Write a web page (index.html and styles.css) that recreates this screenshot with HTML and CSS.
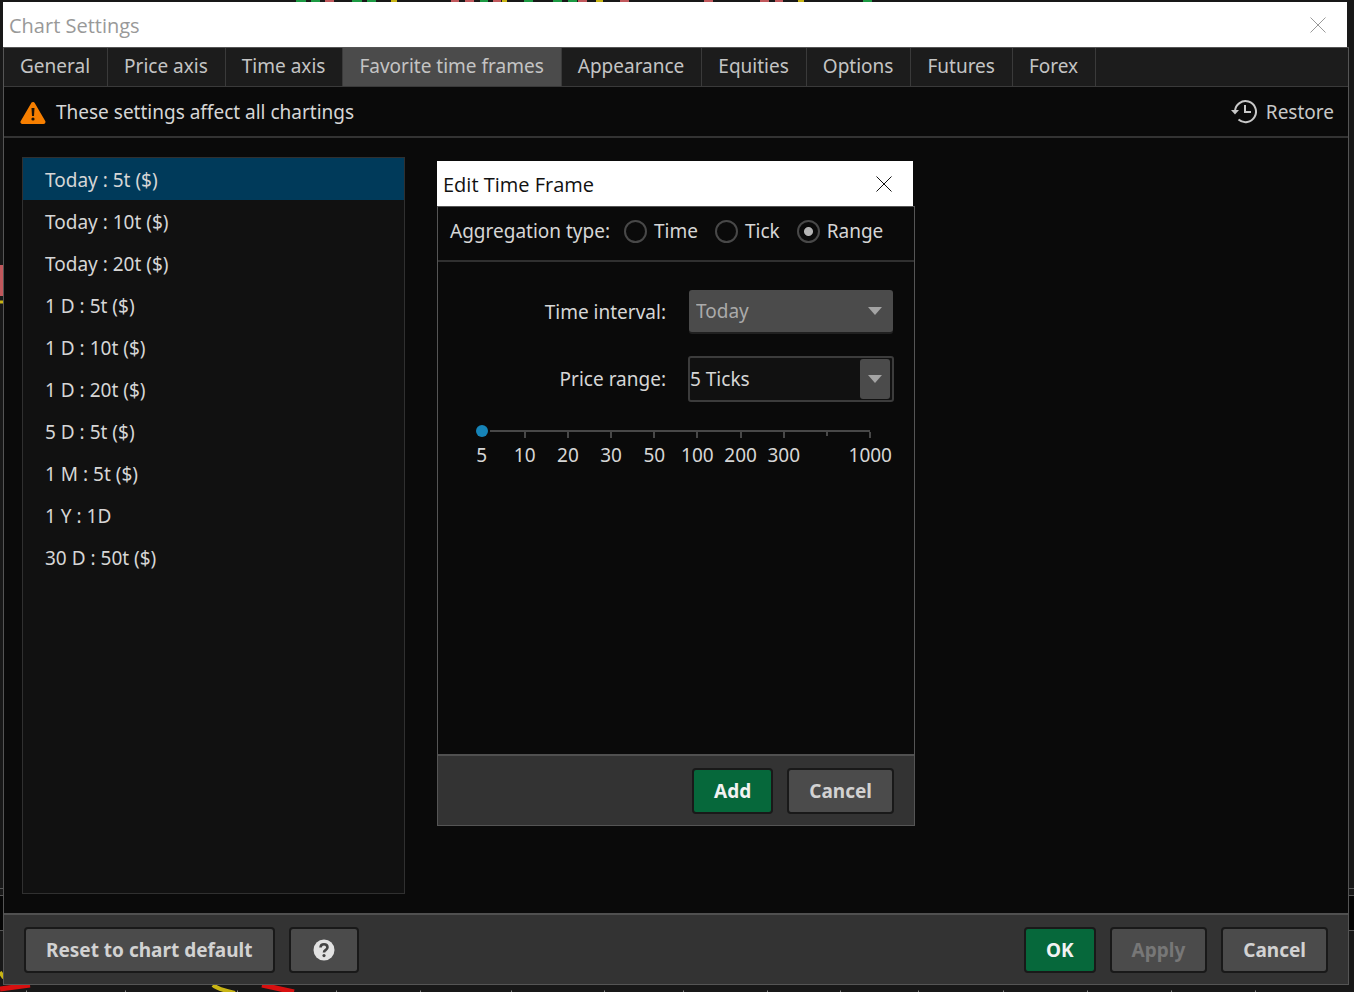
FILE: index.html
```html
<!DOCTYPE html>
<html lang="en">
<head>
<meta charset="utf-8">
<title>Chart Settings</title>
<link rel="stylesheet" href="styles.css">
</head>
<body>
<svg class="backdrop" viewBox="0 0 1354 992" preserveAspectRatio="none" aria-hidden="true">
  <rect width="1354" height="992" fill="#181818"/>
  <path d="M0 265h3v31H0z" fill="#c1585c"/>
  <path d="M0 302h3" stroke="#c8b414" stroke-width="3"/>
  <path d="M0 896h1354v34H0z" fill="#050505"/>
  <path d="M0 888.500h1354M0 895.500h1354M0 930.500h1354" stroke="#555"/>
  <path d="M296 0h10m5 0h9m32 0h10m5 0h9m104 0h8m36 0h9m20 0h9m6 0h9m286 0h9" stroke="#1c9a43" stroke-width="4"/>
  <path d="M325 0h9m117 0h8m6 0h9m19 0h8m77 0h9m33 0h9m75 0h9m47 0h9m6 0h8" stroke="#c1585c" stroke-width="4"/>
  <path d="M391 0h6m105 0h5m89 0h7m195 0h6" stroke="#c8b414" stroke-width="4"/>
  <path d="M0 972l4 6M213 985q4 4 22 8" stroke="#c8b414" stroke-width="4" fill="none"/>
  <path d="M0 989l30-4M262 985l32 7" stroke="#d81010" stroke-width="5" fill="none"/>
  <path d="M26 992h1m98 0h1m111 0h1m98 0h1m83 0h1m90 0h1m92 0h1m78 0h1m83 0h1m72 0h1m77 0h1m84 0h1m83 0h1m83 0h1m83 0h1" stroke="#888" stroke-width="3"/>
</svg>

<div class="window">
  <header class="titlebar titlebar-inactive">
    <h1 class="title">Chart Settings</h1>
    <button class="close" type="button" aria-label="Close settings">
      <svg width="16" height="16" viewBox="0 0 16 16"><path d="M.5.5l15 15M15.500.5l-15 15" stroke="currentColor" fill="none"/></svg>
    </button>
  </header>

  <div class="frame">
    <nav class="tabs">
      <button class="tab" type="button">General</button>
      <button class="tab" type="button">Price axis</button>
      <button class="tab" type="button">Time axis</button>
      <button class="tab tab-active" type="button">Favorite time frames</button>
      <button class="tab" type="button">Appearance</button>
      <button class="tab" type="button">Equities</button>
      <button class="tab" type="button">Options</button>
      <button class="tab" type="button">Futures</button>
      <button class="tab" type="button">Forex</button>
    </nav>

    <div class="notice">
      <svg width="26" height="24" viewBox="0 0 26 24" aria-hidden="true">
        <path d="M13 4L2.500 22h21z" fill="#f77f00" stroke="#f77f00" stroke-width="4" stroke-linejoin="round"/>
        <path d="M11.500 8h3l-.5 8h-2z" fill="#1a1208"/><circle cx="13" cy="19" r="1.600" fill="#1a1208"/>
      </svg>
      <span>These settings affect all chartings</span>
      <button class="restore" type="button">
        <svg width="26" height="26" viewBox="0 0 26 26" fill="none" stroke="currentColor" stroke-width="2" aria-hidden="true">
          <path d="M4 12A10.500 10.500 0 1 1 7.500 20.500"/><path d="M14 6v7h6"/>
          <path d="M0 11h8l-4 4.500z" fill="currentColor" stroke="none"/>
        </svg>
        Restore
      </button>
    </div>

    <main class="content">
      <ul class="list">
        <li class="row row-selected">Today : 5t ($)</li>
        <li class="row">Today : 10t ($)</li>
        <li class="row">Today : 20t ($)</li>
        <li class="row">1 D : 5t ($)</li>
        <li class="row">1 D : 10t ($)</li>
        <li class="row">1 D : 20t ($)</li>
        <li class="row">5 D : 5t ($)</li>
        <li class="row">1 M : 5t ($)</li>
        <li class="row">1 Y : 1D</li>
        <li class="row">30 D : 50t ($)</li>
      </ul>
    </main>

    <footer class="footer">
      <button class="btn" type="button">Reset to chart default</button>
      <button class="btn btn-help" type="button" aria-label="Help">
        <svg width="22" height="22" viewBox="0 0 22 22" aria-hidden="true">
          <circle cx="11" cy="11" r="10.500" fill="#e2e2e2"/>
          <path d="M7.500 8.500Q7.700 5.300 11 5.300T14.500 8.300Q14.500 10 12.700 11T11 13.500" fill="none" stroke="#444" stroke-width="2.600"/>
          <circle cx="11" cy="16.600" r="1.600" fill="#444"/>
        </svg>
      </button>
      <span class="spacer"></span>
      <button class="btn btn-primary" type="button">OK</button>
      <button class="btn" type="button" disabled>Apply</button>
      <button class="btn" type="button">Cancel</button>
    </footer>
  </div>

  <section class="dialog" role="dialog" aria-labelledby="dialog-title">
    <header class="titlebar">
      <h2 class="title" id="dialog-title">Edit Time Frame</h2>
      <button class="close" type="button" aria-label="Close dialog">
        <svg width="16" height="16" viewBox="0 0 16 16"><path d="M.5.5l15 15M15.500.5l-15 15" stroke="currentColor" fill="none"/></svg>
      </button>
    </header>
    <div class="frame">
      <div class="aggregation" role="radiogroup" aria-labelledby="agg-label">
        <span class="agg-label" id="agg-label">Aggregation type:</span>
        <label class="option"><input class="radio" type="radio" name="agg">Time</label>
        <label class="option"><input class="radio" type="radio" name="agg">Tick</label>
        <label class="option"><input class="radio" type="radio" name="agg" checked>Range</label>
      </div>
      <div class="form">
        <div class="fields">
          <label for="interval">Time interval:</label>
          <div class="select-wrap">
            <select class="select" id="interval" disabled><option>Today</option></select>
            <svg class="arrow" width="14" height="8" viewBox="0 0 14 8" aria-hidden="true"><path d="M0 0h14L7 8z" fill="#a4a4a4"/></svg>
          </div>
          <label for="price">Price range:</label>
          <div class="combo">
            <input class="combo-text" id="price" type="text" value="5 Ticks">
            <button class="combo-button" type="button" aria-label="Show price ranges">
              <svg width="14" height="8" viewBox="0 0 14 8" aria-hidden="true"><path d="M0 0h14L7 8z" fill="#a4a4a4"/></svg>
            </button>
          </div>
        </div>
        <div class="slider">
          <input class="range" type="range" min="0" max="9" value="0" aria-label="Price range in ticks">
          <ol class="scale">
            <li class="mark mark-first">5</li><li class="mark">10</li><li class="mark">20</li><li class="mark">30</li><li class="mark">50</li><li class="mark">100</li><li class="mark">200</li><li class="mark">300</li><li class="mark mark-minor"></li><li class="mark">1000</li>
          </ol>
        </div>
      </div>
      <footer class="footer">
        <span class="spacer"></span>
        <button class="btn btn-primary" type="button">Add</button>
        <button class="btn" type="button">Cancel</button>
      </footer>
    </div>
  </section>
</div>
</body>
</html>
```
FILE: styles.css
```css
* { box-sizing: border-box; }

body {
  margin: 0;
  min-height: 100vh;
  display: flex;
  padding: 2px 5px 7px 3px;
  background: #181818;
  color: #d6d6d6;
  font: 19px/26px "Noto Sans", "Open Sans", sans-serif;
}

button, input, select { font: inherit; color: inherit; margin: 0; }

.backdrop {
  position: absolute;
  inset: 0;
  width: 100%;
  height: 100%;
}

.window {
  position: relative;
  flex: 1;
  display: flex;
  flex-direction: column;
}

.titlebar {
  display: flex;
  align-items: center;
  justify-content: space-between;
  height: 45px;
  margin-right: 2px;
  padding: 0 21px 0 6px;
  background: #fff;
  color: #111;
}
.titlebar-inactive { color: #999; }

.title {
  margin: 0;
  padding-top: 2px;
  font-family: "Open Sans", "Noto Sans", sans-serif;
  font-size: 20px;
  font-weight: 400;
}

.close {
  display: flex;
  padding: 0;
  border: 0;
  background: none;
}

.frame {
  flex: 1;
  display: flex;
  flex-direction: column;
  border: 1px solid #555;
  background: #0a0a0a;
}

.tabs {
  display: flex;
  height: 39px;
  background: #1c1c1c;
  border-bottom: 1px solid #3a3a3a;
}
.tab {
  padding: 0 17px 2px 16px;
  border: 0;
  border-right: 1px solid #3a3a3a;
  background: none;
  color: #c4c4c4;
}
.tab-active { background: #4b4b4b; }

.notice {
  display: flex;
  align-items: center;
  gap: 10px;
  height: 51px;
  padding: 0 14px 0 16px;
  border-bottom: 2px solid #333;
}
.restore {
  display: flex;
  align-items: center;
  gap: 9px;
  margin-left: auto;
  padding: 0;
  border: 0;
  background: none;
  color: #c8c8c8;
}

.content {
  flex: 1;
  display: flex;
  padding: 19px 18px;
}
.list {
  width: 383px;
  margin: 0;
  padding: 0;
  list-style: none;
  border: 1px solid #303030;
  background: #111;
}
.row {
  height: 42px;
  padding: 9px 22px 7px;
}
.row-selected { background: #003a5a; }

.footer {
  display: flex;
  align-items: center;
  gap: 14px;
  height: 71px;
  padding: 0 20px;
  border-top: 2px solid #505050;
  background: #333;
}
.spacer { flex: 1; }

.btn {
  height: 46px;
  padding: 0 20px;
  border: 2px solid #191919;
  border-radius: 4px;
  background: #4b4b4b;
  color: #d2d2d2;
  font-weight: 700;
}
.btn-primary { background: #06683b; color: #f2f2f2; }
.btn:disabled { color: #777; }
.btn-help {
  display: flex;
  align-items: center;
  justify-content: center;
  width: 70px;
}
.footer .spacer { margin: 0 -14px; }

.dialog {
  position: absolute;
  top: 159px;
  left: 434px;
  display: flex;
  flex-direction: column;
  width: 478px;
  height: 665px;
}

.aggregation {
  display: flex;
  align-items: center;
  height: 55px;
  padding: 0 12px 5px;
  border-bottom: 2px solid #303030;
  gap: 17px;
}
.agg-label { margin-right: -3px; }
.option {
  display: flex;
  align-items: center;
  gap: 7px;
}
.radio {
  appearance: none;
  width: 23px;
  height: 23px;
  border: 2px solid #484848;
  border-radius: 50%;
}
.radio:checked { background: radial-gradient(circle, #b4b4b4 4px, transparent 5px); }

.form { flex: 1; padding-top: 27px; }
.fields {
  display: grid;
  grid-template-columns: 1fr 206px;
  align-items: center;
  gap: 22px;
  padding-right: 20px;
  text-align: right;
}
.select-wrap {
  position: relative;
  height: 45px;
  padding: 1px;
}
.select {
  appearance: none;
  width: 100%;
  height: 42px;
  padding: 0 7px;
  border: 0;
  border-radius: 3px;
  background: #4b4b4b;
  color: #aaa;
  opacity: 1;
  box-shadow: 0 2px #202020;
}
.arrow {
  position: absolute;
  top: 18px;
  right: 12px;
}
.combo {
  display: flex;
  height: 46px;
  padding: 1px 2px 1px 0;
  border: 2px solid #3c3c3c;
  border-radius: 3px;
  background: #111;
}
.combo-text {
  flex: 1;
  min-width: 0;
  padding: 0;
  border: 0;
  background: none;
}
.combo-button {
  display: flex;
  align-items: center;
  justify-content: center;
  width: 30px;
  padding: 0;
  border: 0;
  border-radius: 3px;
  background: #4b4b4b;
}

.slider { padding: 22px 22px 0; }
.range {
  appearance: none;
  position: relative;
  display: block;
  width: calc(100% - 32px);
  height: 14px;
  margin: 0 16px;
  background: linear-gradient(#484848, #484848) 14px 6px / calc(100% - 20px) 2px no-repeat;
}
.range::-webkit-slider-thumb {
  appearance: none;
  width: 12px;
  height: 12px;
  border-radius: 50%;
  background: #1684b8;
}
.scale {
  display: grid;
  grid-template-columns: repeat(10, 1fr);
  margin: -6px 0 0;
  padding: 0;
  list-style: none;
}
.mark {
  display: flex;
  flex-direction: column;
  align-items: center;
  gap: 4px;
}
.mark::before {
  content: "";
  width: 2px;
  height: 6px;
  background: #484848;
}
.mark-first::before { background: none; }
.mark-minor::before { height: 4px; }
```
